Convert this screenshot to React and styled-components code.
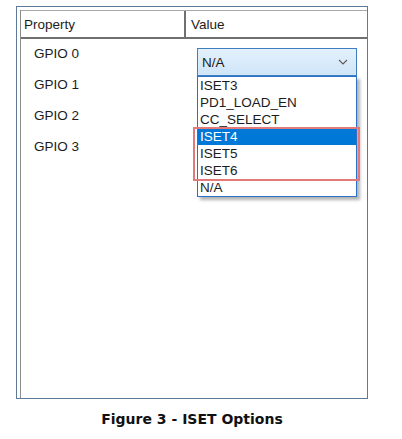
import React from 'react';
import styled, { createGlobalStyle } from 'styled-components';

const GlobalStyle = createGlobalStyle`
  body {
    margin: 0;
    background: #fff;
    font-family: 'Liberation Sans', Arial, sans-serif;
    color: #1c1c1c;
  }
`;

const Page = styled.div`
  width: 352px;
  padding: 6px 0 0 16px;
`;

const Frame = styled.div`
  box-sizing: border-box;
  width: 352px;
  height: 393px;
  border: 1px solid #5d7a98;
  padding: 3px 0 0 3px;
`;

const Grid = styled.div`
  height: 100%;
  border-left: 1px solid #8c8c8c;
  display: flex;
  flex-direction: column;
`;

const Header = styled.div`
  display: grid;
  grid-template-columns: 165px 1fr;
  height: 26px;
  border-top: 1px solid #a9a9a9;
  border-bottom: 2px solid #707070;
`;

const HeadCell = styled.div`
  display: flex;
  align-items: center;
  padding-left: ${(p) => p.$pad}px;
  font-size: 13.5px;
  border-right: ${(p) => (p.$divider ? '2px solid #707070' : 'none')};
`;

const Row = styled.div`
  display: grid;
  grid-template-columns: 167px 1fr;
  height: 31px;
`;

const NameCell = styled.div`
  padding: 7px 0 0 13px;
  font-size: 13.5px;
  line-height: 15px;
`;

const ValueCell = styled.div`
  padding: 9px 0 0 9px;
`;

const ComboWrap = styled.div`
  position: relative;
  width: 160px;
`;

const Combo = styled.div`
  box-sizing: border-box;
  height: 28px;
  border: 1px solid #3d7fc0;
  background: linear-gradient(#e4f1fc, #cfe5f9);
  display: flex;
  align-items: center;
  justify-content: space-between;
  padding: 0 8px 0 4px;
  font-size: 13.5px;
`;

const List = styled.div`
  position: absolute;
  top: 28px;
  left: 0;
  box-sizing: border-box;
  width: 160px;
  border: 1px solid #2a72c8;
  background: #fff;
  box-shadow: 3px 3px 3px rgba(0, 0, 0, 0.3);
  z-index: 2;
`;

const Item = styled.div`
  height: 17px;
  line-height: 17px;
  padding-left: 2px;
  font-size: 13.5px;
  background: ${(p) => (p.$selected ? '#0078d7' : 'transparent')};
  color: ${(p) => (p.$selected ? '#fff' : '#1c1c1c')};
`;

const Callout = styled.div`
  position: absolute;
  left: -4px;
  top: 79px;
  width: 167px;
  height: 54px;
  box-sizing: border-box;
  border: 2px solid #e37a7a;
  z-index: 3;
`;

const Caption = styled.div`
  width: 352px;
  margin-top: 12px;
  text-align: center;
  font-family: 'DejaVu Sans', Verdana, sans-serif;
  font-weight: bold;
  font-size: 14px;
  color: #111;
`;

const Chevron = () => (
  <svg width="10" height="6" viewBox="0 0 10 6">
    <path d="M1 1 L5 5 L9 1" fill="none" stroke="#5a5a5a" strokeWidth="1.1" />
  </svg>
);

const options = ['ISET3', 'PD1_LOAD_EN', 'CC_SELECT', 'ISET4', 'ISET5', 'ISET6', 'N/A'];
const gpios = ['GPIO 0', 'GPIO 1', 'GPIO 2', 'GPIO 3'];

const App = () => (
  <Page>
    <GlobalStyle />
    <Frame>
      <Grid>
        <Header>
          <HeadCell $pad={3} $divider>Property</HeadCell>
          <HeadCell $pad={5}>Value</HeadCell>
        </Header>
        {gpios.map((g, i) => (
          <Row key={g}>
            <NameCell>{g}</NameCell>
            <ValueCell>
              {i === 0 && (
                <ComboWrap>
                  <Combo>
                    <span>N/A</span>
                    <Chevron />
                  </Combo>
                  <List>
                    {options.map((o) => (
                      <Item key={o} $selected={o === 'ISET4'}>{o}</Item>
                    ))}
                  </List>
                  <Callout />
                </ComboWrap>
              )}
            </ValueCell>
          </Row>
        ))}
      </Grid>
    </Frame>
    <Caption>Figure 3 - ISET Options</Caption>
  </Page>
);

export default App;
